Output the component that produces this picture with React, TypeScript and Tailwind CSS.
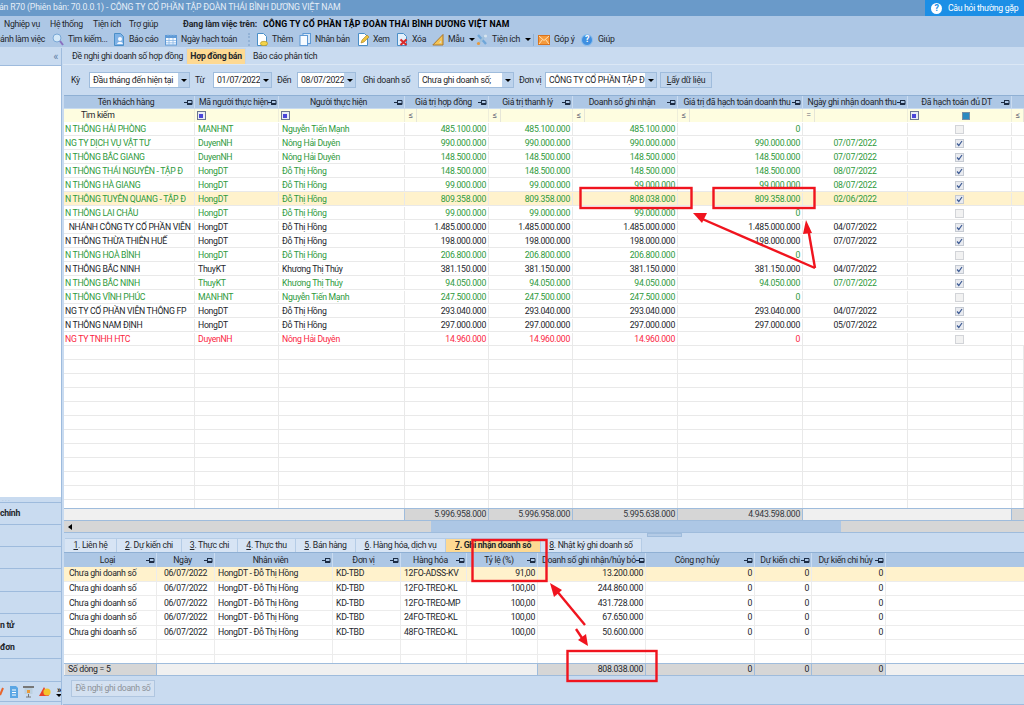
import React from 'react';

type Row = {
  name: string;
  code: string;
  staff: string;
  contract: string;
  paid: string;
  revenue: string;
  booked: string;
  date: string;
  done: boolean;
  color: string;
  active?: boolean;
};

const GREEN = 'text-[#2e9a3c]';
const BLACK = 'text-[#23262b]';
const RED = 'text-[#fb1f3f]';

const rows: Row[] = [
  { name: 'N THÔNG HẢI PHÒNG', code: 'MANHNT', staff: 'Nguyễn Tiến Mạnh', contract: '485.100.000', paid: '485.100.000', revenue: '485.100.000', booked: '0', date: '', done: false, color: GREEN },
  { name: 'NG TY DỊCH VỤ VẬT TƯ', code: 'DuyenNH', staff: 'Nông Hải Duyên', contract: '990.000.000', paid: '990.000.000', revenue: '990.000.000', booked: '990.000.000', date: '07/07/2022', done: true, color: GREEN },
  { name: 'N THÔNG BẮC GIANG', code: 'DuyenNH', staff: 'Nông Hải Duyên', contract: '148.500.000', paid: '148.500.000', revenue: '148.500.000', booked: '148.500.000', date: '07/07/2022', done: true, color: GREEN },
  { name: 'N THÔNG THÁI NGUYÊN - TẬP Đ', code: 'HongDT', staff: 'Đỗ Thị Hồng', contract: '148.500.000', paid: '148.500.000', revenue: '148.500.000', booked: '148.500.000', date: '08/07/2022', done: true, color: GREEN },
  { name: 'N THÔNG HÀ GIANG', code: 'HongDT', staff: 'Đỗ Thị Hồng', contract: '99.000.000', paid: '99.000.000', revenue: '99.000.000', booked: '99.000.000', date: '08/07/2022', done: true, color: GREEN },
  { name: 'N THÔNG TUYÊN QUANG - TẬP Đ', code: 'HongDT', staff: 'Đỗ Thị Hồng', contract: '809.358.000', paid: '809.358.000', revenue: '808.038.000', booked: '809.358.000', date: '02/06/2022', done: true, color: GREEN, active: true },
  { name: 'N THÔNG LAI CHÂU', code: 'HongDT', staff: 'Đỗ Thị Hồng', contract: '99.000.000', paid: '99.000.000', revenue: '99.000.000', booked: '0', date: '', done: false, color: GREEN },
  { name: '\u00a0\u00a0NHÁNH CÔNG TY CỔ PHẦN VIỄN', code: 'HongDT', staff: 'Đỗ Thị Hồng', contract: '1.485.000.000', paid: '1.485.000.000', revenue: '1.485.000.000', booked: '1.485.000.000', date: '04/07/2022', done: true, color: BLACK },
  { name: 'N THÔNG THỪA THIÊN HUẾ', code: 'HongDT', staff: 'Đỗ Thị Hồng', contract: '198.000.000', paid: '198.000.000', revenue: '198.000.000', booked: '198.000.000', date: '07/07/2022', done: true, color: BLACK },
  { name: 'N THÔNG HOÀ BÌNH', code: 'HongDT', staff: 'Đỗ Thị Hồng', contract: '206.800.000', paid: '206.800.000', revenue: '206.800.000', booked: '0', date: '', done: false, color: GREEN },
  { name: 'N THÔNG BẮC NINH', code: 'ThuyKT', staff: 'Khương Thị Thúy', contract: '381.150.000', paid: '381.150.000', revenue: '381.150.000', booked: '381.150.000', date: '04/07/2022', done: true, color: BLACK },
  { name: 'N THÔNG BẮC NINH', code: 'ThuyKT', staff: 'Khương Thị Thúy', contract: '94.050.000', paid: '94.050.000', revenue: '94.050.000', booked: '94.050.000', date: '07/07/2022', done: true, color: GREEN },
  { name: 'N THÔNG VĨNH PHÚC', code: 'MANHNT', staff: 'Nguyễn Tiến Mạnh', contract: '247.500.000', paid: '247.500.000', revenue: '247.500.000', booked: '0', date: '', done: false, color: GREEN },
  { name: 'NG TY CỔ PHẦN VIỄN THÔNG FP', code: 'HongDT', staff: 'Đỗ Thị Hồng', contract: '293.040.000', paid: '293.040.000', revenue: '293.040.000', booked: '293.040.000', date: '04/07/2022', done: true, color: BLACK },
  { name: 'N THÔNG NAM ĐỊNH', code: 'HongDT', staff: 'Đỗ Thị Hồng', contract: '297.000.000', paid: '297.000.000', revenue: '297.000.000', booked: '297.000.000', date: '05/07/2022', done: true, color: BLACK },
  { name: 'NG TY TNHH HTC', code: 'DuyenNH', staff: 'Nông Hải Duyên', contract: '14.960.000', paid: '14.960.000', revenue: '14.960.000', booked: '0', date: '', done: false, color: RED },
];

const details = [
  { item: '12FO-ADSS-KV', rate: '91,00', amount: '13.200.000', active: true },
  { item: '12FO-TREO-KL', rate: '100,00', amount: '244.860.000' },
  { item: '12FO-TREO-MP', rate: '100,00', amount: '431.728.000' },
  { item: '24FO-TREO-KL', rate: '100,00', amount: '67.650.000' },
  { item: '48FO-TREO-KL', rate: '100,00', amount: '50.600.000' },
];

const MAIN_COLS = 'grid grid-cols-[131px_84px_126px_84px_84px_105px_125px_105px_104px_12px]';
const SUB_COLS = 'grid grid-cols-[92px_58px_118px_68px_66px_71px_108px_109px_57px_74px_138px]';

const Pin = () => (
  <svg width="9" height="7" viewBox="0 0 9 7" className="shrink-0">
    <path d="M0 3.5h3M3.5 1v5M3.5 1.5h4.5v4h-4.5M3.5 4.5h4.5" fill="none" stroke="#1c2c44" strokeWidth="1" />
  </svg>
);

const HeadCell = ({ label, className = '' }: { label: string; className?: string }) => (
  <div className={`flex items-center pr-[1px] pl-1 border-r border-[#c9dbf0] overflow-hidden whitespace-nowrap ${className}`}>
    <span className="flex-1 text-center">{label}</span>
    <Pin />
  </div>
);

const Caret = () => (
  <span className="block w-0 h-0 border-l-[3px] border-r-[3px] border-t-[3px] border-l-transparent border-r-transparent border-t-black" />
);

const Combo = ({ value, className }: { value: string; className: string }) => (
  <div className={`h-[16px] flex border border-[#9fbcdc] bg-white shrink-0 ${className}`}>
    <span className="flex-1 pl-[3px] flex items-center overflow-hidden whitespace-nowrap">{value}</span>
    <span className="w-[11px] bg-[#bdd3ec] flex items-center justify-center"><Caret /></span>
  </div>
);

const FilterOp = ({ glyph }: { glyph: string }) => (
  <div className="w-[12px] border-r border-[#e6e6d8] flex items-center justify-center text-[#667] shrink-0">{glyph}</div>
);

const SquareBtn = () => (
  <div className="w-[12px] shrink-0 flex items-center justify-center">
    <span className="w-[9px] h-[9px] border border-[#6b7690] bg-[#e8ecf5] flex items-center justify-center">
      <span className="w-[4px] h-[4px] bg-[#4a45d8]" />
    </span>
  </div>
);

const Check = ({ on }: { on: boolean }) => (
  <span className={`w-[9px] h-[9px] border flex items-center justify-center ${on ? 'border-[#c5cad2] bg-[#e9ebf0]' : 'border-[#d2d4d8] bg-[#f2f2f2]'}`}>
    {on && (
      <svg width="7" height="7" viewBox="0 0 7 7"><path d="M1 3.5l1.8 2L6 1" fill="none" stroke="#3c5a94" strokeWidth="1.2" /></svg>
    )}
  </span>
);

const Doc = ({ children, fill = '#ffffff' }: { children?: React.ReactNode; fill?: string }) => (
  <svg width="12" height="13" viewBox="0 0 12 13" className="shrink-0">
    <path d="M1.5 .5h6l3 3v9h-9z" fill={fill} stroke="#4a8fc8" />
    {children}
  </svg>
);

const tools: { icon: React.ReactNode; label: string; cls: string; caret?: boolean; grip?: boolean }[] = [
  {
    label: 'Tìm kiếm...',
    cls: 'w-[61px] ml-[3px]',
    icon: (
      <svg width="12" height="13" viewBox="0 0 12 13" className="shrink-0">
        <circle cx="5" cy="5" r="4" fill="#d4e8f8" stroke="#7aa8d6" />
        <path d="M8 8l3 4" stroke="#8a70c0" strokeWidth="2" />
      </svg>
    ),
  },
  {
    label: 'Báo cáo',
    cls: 'w-[52px]',
    icon: <Doc fill="#7fb2e6"><circle cx="7" cy="6" r="2" fill="#f4f8ff" /><path d="M4 11c1-3 5-3 6 0z" fill="#f4f8ff" /></Doc>,
  },
  {
    label: 'Ngày hạch toán',
    cls: 'w-[83px]',
    icon: (
      <svg width="12" height="13" viewBox="0 0 12 13" className="shrink-0">
        <rect x=".5" y="2.5" width="11" height="9.5" fill="#f4f9ff" stroke="#5f9ad6" />
        <rect x=".5" y="2.5" width="11" height="2.5" fill="#5f9ad6" />
        <path d="M3 1v2M6 1v2M9 1v2M1 7.5h10M1 9.8h10M4 5v7M8 5v7" stroke="#8ab8e6" strokeWidth=".8" />
      </svg>
    ),
  },
  {
    label: 'Thêm',
    cls: 'w-[51px]',
    grip: true,
    icon: <Doc><ellipse cx="8" cy="10.5" rx="3.6" ry="2.2" fill="#f4d44a" stroke="#b8951e" strokeWidth=".7" /></Doc>,
  },
  {
    label: 'Nhân bản',
    cls: 'w-[58px]',
    icon: (
      <svg width="12" height="13" viewBox="0 0 12 13" className="shrink-0">
        <rect x="4" y=".5" width="7.5" height="10" fill="#dceaf8" stroke="#5f9ad6" />
        <rect x="1" y="2.5" width="7.5" height="10" fill="#f7fbff" stroke="#5f9ad6" />
      </svg>
    ),
  },
  {
    label: 'Xem',
    cls: 'w-[39px]',
    icon: <Doc><path d="M4 10l1-3 5-5 2 2-5 5z" fill="#eec23c" stroke="#a6801c" strokeWidth=".6" /></Doc>,
  },
  {
    label: 'Xóa',
    cls: 'w-[36px]',
    icon: <Doc fill="#e4f0fb"><path d="M4.5 6.5l6 5.5M10.5 6.5l-6 5.5" stroke="#d92a2a" strokeWidth="2.2" /></Doc>,
  },
  {
    label: 'Mẫu',
    cls: 'w-[44px]',
    caret: true,
    icon: (
      <svg width="12" height="13" viewBox="0 0 12 13" className="shrink-0">
        <path d="M.8 12L11 1.5V12z" fill="#f4c456" stroke="#a9762a" />
        <path d="M7 9.8L9.2 7.6v2.2z" fill="#cfe0f2" />
      </svg>
    ),
  },
  {
    label: 'Tiện ích',
    cls: 'w-[57px]',
    caret: true,
    icon: (
      <svg width="12" height="13" viewBox="0 0 12 13" className="shrink-0">
        <path d="M2 2l8 9" stroke="#6ea6d8" strokeWidth="2.4" />
        <path d="M10 2l-8 9" stroke="#9fc0dc" strokeWidth="2" />
        <circle cx="2.5" cy="10.5" r="1.6" fill="#e89a3c" />
        <circle cx="9.5" cy="3" r="1.6" fill="#d8e4ee" />
      </svg>
    ),
  },
];

const SubTabs = [
  { n: '1', label: '. Liên hệ', cls: 'w-[52px]' },
  { n: '2', label: '. Dự kiến chi', cls: 'w-[65px]' },
  { n: '3', label: '. Thực chi', cls: 'w-[56px]' },
  { n: '4', label: '. Thực thu', cls: 'w-[58px]' },
  { n: '5', label: '. Bán hàng', cls: 'w-[60px]' },
  { n: '6', label: '. Hàng hóa, dịch vụ', cls: 'w-[90px]' },
  { n: '7', label: '. Ghi nhận doanh số', cls: 'w-[95px]', active: true },
  { n: '8', label: '. Nhật ký ghi doanh số', cls: 'w-[101px]' },
];

const sideItems = [
  { label: 'chính', cls: 'h-[22px]' },
  { label: '', cls: 'h-[22px]' },
  { label: '', cls: 'h-[22px]' },
  { label: '', cls: 'h-[23px]' },
  { label: '', cls: 'h-[22px]' },
  { label: 'n tử', cls: 'h-[23px]' },
  { label: 'đơn', cls: 'h-[22px]' },
  { label: '', cls: 'h-[23px]' },
];

const App = () => {
  return (
    <div className="relative w-[1024px] h-[705px] overflow-hidden flex flex-col bg-[#c9dbf0] text-[8.7px] tracking-[-0.3px] leading-none text-[#23262b] font-['Roboto','Liberation_Sans',sans-serif]">
      {/* Title bar */}
      <div className="h-[16px] shrink-0 bg-[#6a9ac9] flex items-center justify-between">
        <span className="text-[#e6eef7] whitespace-nowrap -ml-[1px] pb-[1px] tracking-[-0.14px]">án R70 (Phiên bản: 70.0.0.1) - CÔNG TY CỔ PHẦN TẬP ĐOÀN THÁI BÌNH DƯƠNG VIỆT NAM</span>
        <div className="w-[99px] h-[16px] bg-[#1c8fe6] flex items-center text-white pl-[6px] gap-[6px] whitespace-nowrap overflow-hidden">
          <span className="w-[11px] h-[11px] rounded-full bg-white text-[#1c8fe6] flex items-center justify-center text-[9px] font-bold shrink-0">?</span>
          <span>Câu hỏi thường gặp</span>
        </div>
      </div>

      {/* Menu */}
      <div className="h-[16px] shrink-0 bg-[#adc7e5] flex items-center whitespace-nowrap">
        <span className="ml-[4px] w-[46px]">Nghiệp vụ</span>
        <span className="w-[43px]">Hệ thống</span>
        <span className="w-[36px]">Tiện ích</span>
        <span className="w-[54px]">Trợ giúp</span>
        <span className="font-bold w-[80px] tracking-[-0.05px]">Đang làm việc trên:</span>
        <span className="font-bold text-black tracking-[0.15px]">CÔNG TY CỔ PHẦN TẬP ĐOÀN THÁI BÌNH DƯƠNG VIỆT NAM</span>
      </div>

      {/* Toolbar */}
      <div className="h-[15px] shrink-0 bg-[#adc7e5] flex items-center whitespace-nowrap">
        <span className="w-[49px] overflow-hidden">ánh làm việc</span>
        {tools.map((t) => (
          <div key={t.label} className={`flex items-center gap-[4px] shrink-0 ${t.cls}`}>
            {t.grip && <span className="w-[2px] h-[13px] border-l-2 border-dotted border-[#92b2d6] mr-[2px]" />}
            {t.icon}
            <span>{t.label}</span>
            {t.caret && <span className="ml-[1px]"><Caret /></span>}
          </div>
        ))}
        <span className="w-[1px] h-[12px] bg-[#8fb0d4] mr-[4px]" />
        <div className="flex items-center gap-[4px] w-[43px] shrink-0">
          <svg width="12" height="10" viewBox="0 0 12 10" className="shrink-0">
            <rect x=".5" y=".5" width="11" height="9" fill="#f59a3c" stroke="#d8721c" />
            <path d="M1 1l5 4.5L11 1M1 9l3.5-4.5M11 9L7.5 4.5" fill="none" stroke="#fde0b4" />
          </svg>
          <span>Góp ý</span>
        </div>
        <div className="flex items-center gap-[4px] shrink-0">
          <span className="w-[12px] h-[12px] rounded-full bg-[#3f8fe0] border border-[#8ec0ee] text-white font-bold text-[9px] flex items-center justify-center">?</span>
          <span className="ml-[1px]">Giúp</span>
        </div>
      </div>

      <div className="flex-1 flex min-h-0 pt-[1px]">
        {/* Left panel */}
        <div className="w-[62px] shrink-0 flex flex-col border-r border-[#9ebbdd]">
          <div className="h-[17px] shrink-0 flex items-center justify-end pr-[3px] text-[#5f7fa6] text-[11px]">«</div>
          <div className="h-[432px] shrink-0 bg-white border-t border-[#9ebbdd]" />
          <div className="h-[5px] shrink-0 flex items-center pl-[2px] text-[#8fa9c8] tracking-normal text-[6px]">· · ·</div>
          {sideItems.map((s, i) => (
            <div key={i} className={`shrink-0 border-t border-[#9ebbdd] flex items-center font-bold ${s.cls}`}>
              {s.label}
            </div>
          ))}
          <div className="h-[21px] shrink-0 border-y border-[#9ebbdd] flex items-center gap-[5px] overflow-hidden">
            <svg width="4" height="11" viewBox="0 0 4 11" className="shrink-0"><path d="M0 9L3 2" stroke="#e8642c" strokeWidth="2" /></svg>
            <svg width="8" height="12" viewBox="0 0 8 12" className="shrink-0 ml-[1px]"><path d="M0 0h6l2 2v10H0z" fill="#5aa6e4" /><path d="M2 4h4M2 6.5h4M2 9h4" stroke="#fff" /></svg>
            <svg width="11" height="12" viewBox="0 0 11 12" className="shrink-0"><path d="M0 1h11" stroke="#777" strokeWidth="2" /><rect x="1.5" y="2" width="8" height="6" fill="#bcd0e0" /><rect x="4" y="4" width="3" height="3" fill="#e89a3c" /><path d="M5.5 8v3M3 11h5" stroke="#777" /></svg>
            <svg width="12" height="11" viewBox="0 0 12 11" className="shrink-0"><path d="M5 1l5 9H0z" fill="#e8442c" /><circle cx="8" cy="6" r="3.6" fill="#f4c42c" /></svg>
            <span className="text-[9px] font-bold text-black leading-[7px] flex flex-col items-center">»<Caret /></span>
          </div>
        </div>

        {/* Main */}
        <div className="flex-1 min-w-0 flex flex-col pl-[1px]">
          {/* Top tabs */}
          <div className="h-[17px] shrink-0 flex items-end whitespace-nowrap border-b border-[#dbe7f5]">
            <span className="ml-[9px] w-[114px] h-[16px] flex items-center">Đề nghị ghi doanh số hợp đồng</span>
            <span className="w-[60px] h-[16px] bg-[#fdd993] flex items-center justify-center font-bold border-t border-x border-[#c4d6ea]">Hợp đồng bán</span>
            <span className="ml-[7px] h-[16px] flex items-center">Báo cáo phân tích</span>
          </div>

          {/* Filter */}
          <div className="h-[30px] shrink-0 flex items-center whitespace-nowrap pl-[1px]">
            <span className="ml-[7px] w-[18px]">Kỳ</span>
            <Combo value="Đầu tháng đến hiện tại" className="w-[101px]" />
            <span className="ml-[5px] w-[18px]">Từ</span>
            <Combo value="01/07/2022" className="w-[59px]" />
            <span className="ml-[5px] w-[20px]">Đến</span>
            <Combo value="08/07/2022" className="w-[59px]" />
            <span className="ml-[7px] w-[55px]">Ghi doanh số</span>
            <Combo value="Chưa ghi doanh số;" className="w-[96px]" />
            <span className="ml-[5px] w-[26px]">Đơn vị</span>
            <Combo value="CÔNG TY CỔ PHẦN TẬP Đ" className="w-[112px]" />
            <button className="ml-[3px] w-[52px] h-[16px] bg-[#c1d5ec] border border-[#9fbcdc] flex items-center justify-center"><span className="underline">L</span>ấy dữ liệu</button>
          </div>

          {/* Main grid */}
          <div className="ml-[1px] shrink-0 flex flex-col">
            <div className={`${MAIN_COLS} h-[13px] bg-[#adc7e5] border-t border-[#8fb0d4]`}>
              {['Tên khách hàng', 'Mã người thực hiện', 'Người thực hiện', 'Giá trị hợp đồng', 'Giá trị thanh lý', 'Doanh số ghi nhận', 'Giá trị đã hạch toán doanh thu', 'Ngày ghi nhận doanh thu', 'Đã hạch toán đủ DT'].map((h) => (
                <HeadCell key={h} label={h} />
              ))}
              <div />
            </div>
            <div className={`${MAIN_COLS} h-[14px] bg-[#fefde0] border-t border-[#c9dbf0]`}>
              <div className="pl-[17px] flex items-center border-r border-[#eeeeda]">Tìm kiếm</div>
              <div className="flex border-r border-[#eeeeda]"><SquareBtn /></div>
              <div className="flex border-r border-[#eeeeda]"><SquareBtn /></div>
              <div className="flex border-r border-[#eeeeda]"><FilterOp glyph="≤" /></div>
              <div className="flex border-r border-[#eeeeda]"><FilterOp glyph="≤" /></div>
              <div className="flex border-r border-[#eeeeda]"><FilterOp glyph="≤" /></div>
              <div className="flex border-r border-[#eeeeda]"><FilterOp glyph="≤" /></div>
              <div className="flex border-r border-[#eeeeda]"><FilterOp glyph="=" /></div>
              <div className="flex border-r border-[#eeeeda]">
                <SquareBtn />
                <div className="flex-1 flex items-center justify-center"><span className="w-[8px] h-[8px] bg-[#2c8ac0] border border-[#7a8ea4]" /></div>
              </div>
              <FilterOp glyph="≤" />
            </div>
            <div className="h-[386px] bg-white overflow-hidden">
              {rows.map((r, i) => (
                <div key={i} className={`${MAIN_COLS} h-[14px] pt-[1px] border-b border-[#e9e9e9] whitespace-nowrap ${r.color} ${r.active ? 'bg-[#fff2cc]' : ''}`}>
                  <div className="pl-[1px] flex items-center overflow-hidden border-r border-[#e9e9e9]">{r.name}</div>
                  <div className="pl-[3px] flex items-center border-r border-[#e9e9e9]">{r.code}</div>
                  <div className="pl-[3px] flex items-center border-r border-[#e9e9e9]">{r.staff}</div>
                  <div className="pr-[2px] flex items-center justify-end border-r border-[#e9e9e9]">{r.contract}</div>
                  <div className="pr-[2px] flex items-center justify-end border-r border-[#e9e9e9]">{r.paid}</div>
                  <div className="pr-[2px] flex items-center justify-end border-r border-[#e9e9e9]">{r.revenue}</div>
                  <div className="pr-[2px] flex items-center justify-end border-r border-[#e9e9e9]">{r.booked}</div>
                  <div className="flex items-center justify-center border-r border-[#e9e9e9]">{r.date}</div>
                  <div className="flex items-center justify-center border-r border-[#e9e9e9]"><Check on={r.done} /></div>
                  <div />
                </div>
              ))}
              {Array.from({ length: 12 }).map((_, i) => (
                <div key={i} className={`${MAIN_COLS} h-[14px] border-b border-[#e9e9e9]`}>
                  {Array.from({ length: 10 }).map((__, j) => (
                    <div key={j} className="border-r border-[#e9e9e9]" />
                  ))}
                </div>
              ))}
            </div>
            <div className={`${MAIN_COLS} h-[13px] bg-[#f0f0f0] border-y border-[#9fbcdc] text-[#33373d]`}>
              <div className="col-span-3 border-r border-[#9fbcdc]" />
              {['5.996.958.000', '5.996.958.000', '5.995.638.000', '4.943.598.000'].map((v, i) => (
                <div key={i} className="bg-[#d6d6d6] border-r border-[#9fbcdc] flex items-center justify-end pr-[2px]">{v}</div>
              ))}
              <div className="col-span-2 border-r border-[#9fbcdc]" />
              <div className="bg-[#d6d6d6]" />
            </div>
            <div className="h-[12px] flex bg-[#d6d6d6] border-b border-[#9fbcdc]">
              <div className="w-[11px] flex items-center justify-center">
                <span className="w-0 h-0 border-y-[3px] border-r-[4px] border-y-transparent border-r-black" />
              </div>
              <div className="w-[356px]" />
              <div className="w-[410px] bg-[#adc7e5]" />
            </div>
          </div>

          {/* Splitter */}
          <div className="h-[5px] shrink-0 flex pl-[584px]">
            <div className="w-[35px] h-[4px] bg-[#b4cbe6] border border-[#9fbcdc]" />
          </div>

          {/* Bottom tabs */}
          <div className="h-[14px] shrink-0 flex whitespace-nowrap pl-[2px]">
            {SubTabs.map((t) => (
              <div key={t.n} className={`h-[14px] flex items-center justify-center shrink-0 border-t border-r border-[#b5cce6] ${t.cls} ${t.active ? 'bg-[#fdd993] font-bold' : 'bg-[#d7e4f4]'}`}>
                <span className="underline">{t.n}</span>{t.label}
              </div>
            ))}
          </div>

          {/* Detail grid */}
          <div className="ml-[1px] shrink-0 flex flex-col">
            <div className={`${SUB_COLS} h-[15px] bg-[#adc7e5] border-t border-[#8fb0d4] pl-[1px]`}>
              {['Loại', 'Ngày', 'Nhân viên', 'Đơn vị', 'Hàng hóa', 'Tỷ lệ (%)', 'Doanh số ghi nhận/hủy bỏ', 'Công nợ hủy', 'Dự kiến chi', 'Dự kiến chi hủy'].map((h) => (
                <HeadCell key={h} label={h} />
              ))}
              <div />
            </div>
            <div className="h-[96px] bg-white overflow-hidden">
              {details.map((d) => (
                <div key={d.item} className={`${SUB_COLS} h-[14.67px] pl-[1px] whitespace-nowrap border-b border-[#ececec] ${d.active ? 'bg-[#fff2cc]' : ''}`}>
                  <div className="pl-[4px] flex items-center border-r border-[#ececec]">Chưa ghi doanh số</div>
                  <div className="flex items-center justify-center border-r border-[#ececec]">06/07/2022</div>
                  <div className="pl-[3px] flex items-center border-r border-[#ececec]">HongDT - Đỗ Thị Hồng</div>
                  <div className="pl-[3px] flex items-center border-r border-[#ececec]">KD-TBD</div>
                  <div className="pl-[3px] flex items-center border-r border-[#ececec]">{d.item}</div>
                  <div className="pr-[2px] flex items-center justify-end border-r border-[#ececec]">{d.rate}</div>
                  <div className="pr-[2px] flex items-center justify-end border-r border-[#ececec]">{d.amount}</div>
                  <div className="pr-[2px] flex items-center justify-end border-r border-[#ececec]">0</div>
                  <div className="pr-[2px] flex items-center justify-end border-r border-[#ececec]">0</div>
                  <div className="pr-[2px] flex items-center justify-end border-r border-[#ececec]">0</div>
                  <div />
                </div>
              ))}
              {[0, 1].map((i) => (
                <div key={i} className={`${SUB_COLS} h-[14.67px] pl-[1px] border-b border-[#ececec]`}>
                  {Array.from({ length: 10 }).map((_, j) => (
                    <div key={j} className="border-r border-[#ececec]" />
                  ))}
                </div>
              ))}
            </div>
            <div className={`${SUB_COLS} h-[13px] pl-[1px] bg-[#f0f0f0] border-y border-[#9fbcdc] whitespace-nowrap`}>
              <div className="bg-[#d6d6d6] flex items-center pl-[3px] border-r border-[#9fbcdc]">Số dòng = 5</div>
              <div className="col-span-5 border-r border-[#9fbcdc]" />
              <div className="bg-[#d6d6d6] flex items-center justify-end pr-[2px] border-r border-[#9fbcdc]">808.038.000</div>
              {[0, 1, 2].map((i) => (
                <div key={i} className="bg-[#d6d6d6] flex items-center justify-end pr-[2px] border-r border-[#9fbcdc]">0</div>
              ))}
              <div />
            </div>
          </div>
          <div className="h-[29px] shrink-0 flex items-center pl-[8px] pb-[3px] border-b border-[#9ebbdd]">
            <button className="w-[84px] h-[17px] bg-[#d4e1f1] border border-[#b0c6e0] text-[#8d9299] flex items-center justify-center whitespace-nowrap">Đề nghị ghi doanh số</button>
          </div>
        </div>
      </div>

      {/* Red annotations drawn over the screenshot */}
      <svg className="absolute inset-0 pointer-events-none" width="1024" height="705" viewBox="0 0 1024 705">
        <g fill="none" stroke="#f0141e" strokeWidth="2.4">
          <rect x="580.5" y="188" width="111" height="20" />
          <rect x="713.5" y="188" width="101" height="20" />
          <rect x="472.5" y="540" width="74" height="41" />
          <rect x="567.5" y="651" width="89" height="30" />
          <path d="M700 218L815 268" />
          <path d="M808 228L815 268" />
          <path d="M556 590L585 625" />
          <path d="M576 629L584 641" />
        </g>
        <g fill="#f0141e">
          <polygon points="693,213 707,213 702,223" />
          <polygon points="806,220 812,233 803,234" />
          <polygon points="550,583 562,590 554,597" />
          <polygon points="588,646 578,640 586,634" />
        </g>
      </svg>
    </div>
  );
};

export default App;
